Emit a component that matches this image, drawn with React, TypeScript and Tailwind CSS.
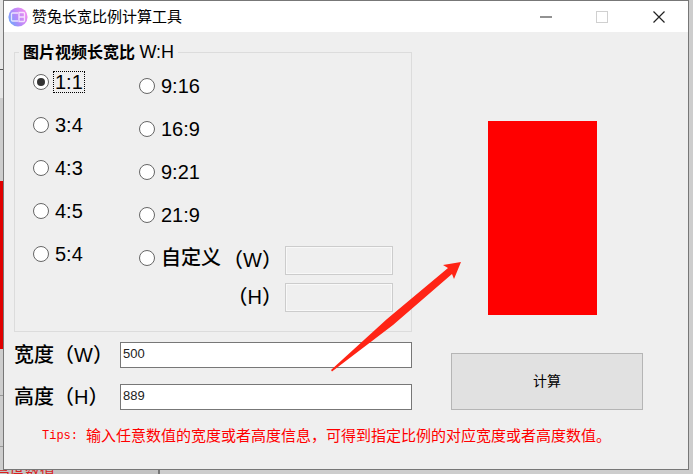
import { useState } from 'react'

const FIRST_RATIOS = ['1:1', '3:4', '4:3', '4:5', '5:4']
const SECOND_RATIOS = ['9:16', '16:9', '9:21', '21:9', '自定义']

function AppIcon() {
  return (
    <svg viewBox="0 0 20 20" className="size-5" aria-hidden="true">
      <defs>
        <linearGradient id="app-icon" x1="0" y1="0.8" x2="1" y2="0.3">
          <stop offset="0" stopColor="#6aa8fb" />
          <stop offset="0.45" stopColor="#b48bfa" />
          <stop offset="1" stopColor="#f58cf0" />
        </linearGradient>
      </defs>
      <circle cx="10" cy="10" r="9.6" fill="url(#app-icon)" />
      <path
        d="M10 6H4.500a1 1 0 0 0-1 1v6a1 1 0 0 0 1 1H10M11 5.500v9h4.500a1 1 0 0 0 1-1v-7a1 1 0 0 0-1-1zM11 10h5.500"
        fill="none"
        stroke="#fff"
        strokeOpacity="0.75"
        strokeWidth="1.300"
      />
    </svg>
  )
}

function TitleBar() {
  return (
    <header className="flex h-[31px] shrink-0 items-center bg-white pl-1">
      <AppIcon />
      <h1 className="ml-1 flex-1 text-[15px] leading-5">赞兔长宽比例计算工具</h1>
      <button aria-label="最小化" className="flex h-full w-14 items-center justify-center">
        <svg viewBox="0 0 12 12" className="size-3">
          <path d="M0 6h12" stroke="#777" strokeWidth="1.600" />
        </svg>
      </button>
      <button
        aria-label="最大化"
        disabled
        className="flex h-full w-14 items-center justify-center"
      >
        <svg viewBox="0 0 12 12" className="size-3">
          <rect x="0.500" y="0.500" width="11" height="11" fill="none" stroke="#d0d0d0" />
        </svg>
      </button>
      <button aria-label="关闭" className="flex h-full w-[58px] items-center justify-center">
        <svg viewBox="0 0 12 12" className="size-3">
          <path d="M0.500 0.500l11 11M11.500 0.500l-11 11" stroke="#222" strokeWidth="1.200" />
        </svg>
      </button>
    </header>
  )
}

function RatioOption({
  value,
  checked,
  onSelect
}: {
  value: string
  checked: boolean
  onSelect: (value: string) => void
}) {
  return (
    <label className="flex h-5 w-fit items-center gap-1 text-[20px] leading-5 font-medium whitespace-nowrap">
      <input
        type="radio"
        name="ratio"
        checked={checked}
        onChange={() => onSelect(value)}
        className="grid size-4 appearance-none place-content-center rounded-full border border-[#666] bg-white before:size-2 before:rounded-full checked:before:bg-[#333]"
      />
      <span
        className={`border border-dotted px-px ${checked ? 'border-black' : 'border-transparent'}`}
      >
        {value}
      </span>
    </label>
  )
}

function SizeField({
  id,
  label,
  value,
  onChange
}: {
  id: string
  label: string
  value: string
  onChange: (value: string) => void
}) {
  return (
    <div className="flex items-center">
      <label htmlFor={id} className="w-[106px] text-[20px] leading-[26px] font-medium">
        {label}
      </label>
      <input
        id={id}
        value={value}
        onChange={(e) => onChange(e.target.value)}
        className="h-[26px] min-w-0 flex-1 border border-[#777] bg-white px-[2px] pb-[3px] text-[13px] text-[#222]"
      />
    </div>
  )
}

function CustomField({ label }: { label: string }) {
  return (
    <label className="flex items-center gap-[3px]">
      {label}
      <input
        disabled
        className="h-[29px] w-[108px] border border-[#ccc] bg-[#efefef] px-1 outline-1 -outline-offset-2 outline-[#f8f8f8]"
      />
    </label>
  )
}

export default function App() {
  const [ratio, setRatio] = useState('1:1')
  const [width, setWidth] = useState('500')
  const [height, setHeight] = useState('889')

  return (
    <div className="relative flex min-h-screen flex-col bg-[#cdcdcd] pr-1 pb-1 pl-[3px] font-['Liberation_Sans','Noto_Sans_CJK_SC',sans-serif] text-black">
      {/* edge of the window that lies behind */}
      <div className="absolute top-0 left-0 h-[98px] w-[3px] bg-[#e6e6e6]" />
      <div className="absolute top-[69px] left-0 h-px w-[3px] bg-[#555]" />
      <div className="absolute top-[181px] left-0 h-[168px] w-[3px] bg-[#e00000]" />
      <div className="absolute top-[395px] left-0 h-px w-[3px] bg-[#999]" />
      <div className="absolute top-[446px] left-0 h-px w-[3px] bg-[#999]" />
      <div className="absolute bottom-0 left-0 h-1 w-[160px] overflow-hidden border-r-2 border-[#777] bg-[#c2c2c2]">
        <p className="-mt-2 -ml-5 text-[15px] leading-5 whitespace-nowrap text-[#d82020]">
          者高度数值。
        </p>
      </div>

      <div className="relative flex flex-1 flex-col border border-[#777] bg-[#efefef]">
        <TitleBar />
        <main className="flex">
          <div className="flex w-[408px] flex-col pl-[10px]">
            <fieldset className="mt-2 h-[292px] border border-[#dcdcdc] px-[18px]">
              <legend className="-ml-[14px] px-1 text-[16px] leading-6 font-bold">
                图片视频长宽比 <span className="text-[18px] font-medium">W:H</span>
              </legend>
              <div className="flex">
                <div className="mt-[7px] flex w-[106px] flex-col gap-[23px]">
                  {FIRST_RATIOS.map((r) => (
                    <RatioOption key={r} value={r} checked={ratio === r} onSelect={setRatio} />
                  ))}
                </div>
                <div className="mt-[11px] flex flex-col gap-[23px]">
                  {SECOND_RATIOS.map((r) => (
                    <RatioOption key={r} value={r} checked={ratio === r} onSelect={setRatio} />
                  ))}
                </div>
                <div className="mt-[181px] flex flex-1 flex-col items-end gap-2 text-[20px] leading-[29px] font-medium">
                  <CustomField label="（W）" />
                  <CustomField label="（H）" />
                </div>
              </div>
            </fieldset>
            <div className="mt-[10px] flex flex-col gap-4">
              <SizeField id="width" label="宽度（W）" value={width} onChange={setWidth} />
              <SizeField id="height" label="高度（H）" value={height} onChange={setHeight} />
            </div>
          </div>
          <div className="flex flex-1 flex-col items-start pr-[45px] pl-[39px]">
            <div className="mt-[89px] ml-[37px] h-[194px] w-[109px] bg-[#ff0000]" />
            <button className="mt-[38px] h-[57px] w-full border border-[#b5b5b5] bg-[#e1e1e1] text-[14px]">
              计算
            </button>
          </div>
        </main>
        <p className="mt-4 ml-[38px] flex gap-2 text-[15px] leading-5 whitespace-nowrap text-[#ff0000]">
          <span className="font-['Liberation_Mono',monospace] text-[12px]">Tips:</span>
          输入任意数值的宽度或者高度信息，可得到指定比例的对应宽度或者高度数值。
        </p>
      </div>

      {/* pointer annotation from the inputs up to the preview */}
      <svg
        viewBox="0 0 130 110"
        className="pointer-events-none absolute top-[262px] left-[331px] h-[110px] w-[130px]"
        aria-hidden="true"
      >
        <path d="M130 0L112 3l5 3L56 57 0 108l1 1.500L62 63 121 12l2 5z" fill="#ff2415" />
      </svg>
    </div>
  )
}
